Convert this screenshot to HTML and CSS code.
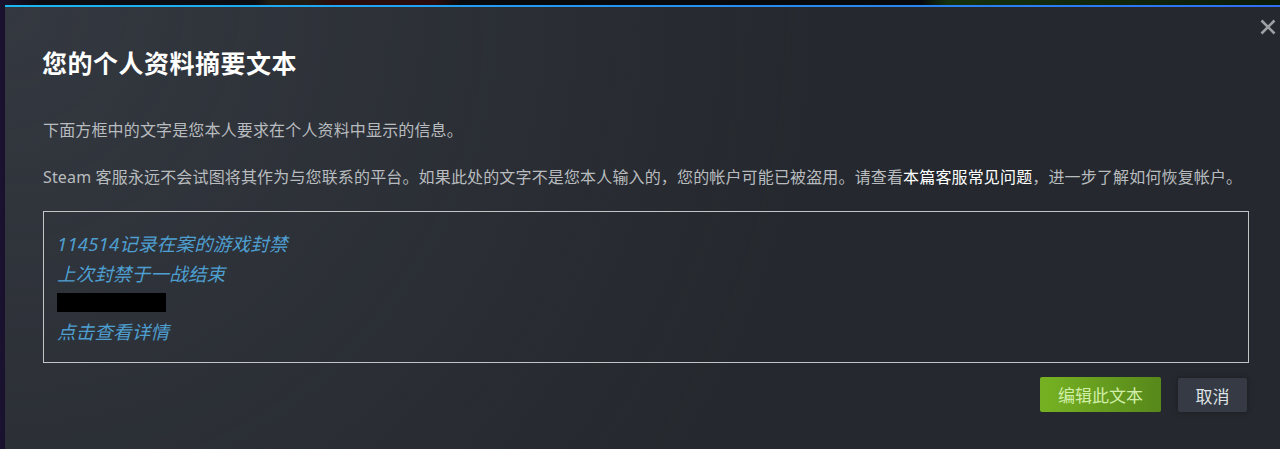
FILE: index.html
```html
<!DOCTYPE html>
<html lang="zh-CN">
<head>
    <meta charset="UTF-8">
    <meta name="viewport" content="width=device-width, initial-scale=1.0">
    <title>您的个人资料摘要文本</title>
    <link rel="stylesheet" href="styles.css">
</head>
<body>
    <div class="dialog">
        <button class="close-btn" title="关闭">
            <svg width="16" height="16" viewBox="0 0 16 16">
                <path d="M1.5 1.5 L14.5 14.5 M14.5 1.5 L1.5 14.5" stroke="#9da1a6" stroke-width="2.6" fill="none"/>
            </svg>
        </button>
        <h1>您的个人资料摘要文本</h1>
        <p class="desc">下面方框中的文字是您本人要求在个人资料中显示的信息。</p>
        <p class="desc">Steam 客服永远不会试图将其作为与您联系的平台。如果此处的文字不是您本人输入的，您的帐户可能已被盗用。请查看<a href="#" class="faq">本篇客服常见问题</a>，进一步了解如何恢复帐户。</p>
        <div class="summary-box">
            <div class="line">114514记录在案的游戏封禁</div>
            <div class="line">上次封禁于一战结束</div>
            <div class="spoiler"></div>
            <div class="line">点击查看详情</div>
        </div>
        <div class="actions">
            <button class="btn btn-green">编辑此文本</button>
            <button class="btn btn-dark">取消</button>
        </div>
    </div>
</body>
</html>
```

FILE: styles.css
```css
body {
    margin: 0;
    height: 449px;
    overflow: hidden;
    background: linear-gradient(to right, #1a1230 0%, #0b0c12 3%, #0b0c12 20%, #1f1a12 21%, #1f1a12 24%, #2a0c0c 26%, #2a0c0c 34%, #08090d 36%, #08090d 72%, #15300f 74%, #0c1a0a 100%);
    font-family: "Noto Sans", "Noto Sans CJK SC", sans-serif;
}
.dialog {
    position: relative;
    margin: 5px 0 0 5px;
    height: 444px;
    box-sizing: border-box;
    padding: 41px 31px 0 37px;
    border-top: 2px solid #1fb0f0;
    border-image: linear-gradient(to right, #1cb8f2, #2f6ff0) 1;
    border-width: 2px 0 0 0;
    background: radial-gradient(circle at top left, rgba(74, 81, 92, 0.4) 0%, rgba(75, 81, 92, 0) 60%), #25282e;
}
.close-btn {
    position: absolute;
    top: 12px;
    right: 4px;
    background: none;
    border: none;
    padding: 0;
    cursor: pointer;
}
h1 {
    margin: 0 0 41px 0;
    font-size: 25px;
    line-height: 30px;
    font-weight: bold;
    letter-spacing: 0.5px;
    color: #ffffff;
}
.desc {
    margin: 0 0 25px 1px;
    font-size: 16px;
    line-height: 22px;
    letter-spacing: 0.15px;
    white-space: nowrap;
    color: #b8bcbf;
}
.faq {
    color: #ffffff;
    text-decoration: none;
}
.summary-box {
    margin: -2px 0 0 1px;
    border: 1px solid #c2c4c6;
    padding: 17px 13px 15px;
}
.line {
    font-size: 18.5px;
    line-height: 30px;
    font-style: italic;
    letter-spacing: 0.2px;
    color: #4e9fd0;
}
.spoiler {
    width: 109px;
    height: 19px;
    margin: 4px 0 5px;
    background: #000000;
}
.actions {
    display: flex;
    justify-content: flex-end;
    gap: 17px;
    margin: 14px 2px 0 0;
}
.btn {
    border: none;
    border-radius: 2px;
    font-family: "Noto Sans", "Noto Sans CJK SC", sans-serif;
    font-size: 17px;
    height: 35px;
    cursor: pointer;
}
.btn-green {
    width: 121px;
    background: linear-gradient(to right, #75b022 5%, #588a1b 95%);
    color: #d2efa9;
}
.btn-dark {
    width: 69px;
    height: 34px;
    margin-top: 1px;
    background: #353a44;
    color: #dfe3e6;
    box-shadow: 0 0 6px rgba(0, 0, 0, 0.3);
}
```
